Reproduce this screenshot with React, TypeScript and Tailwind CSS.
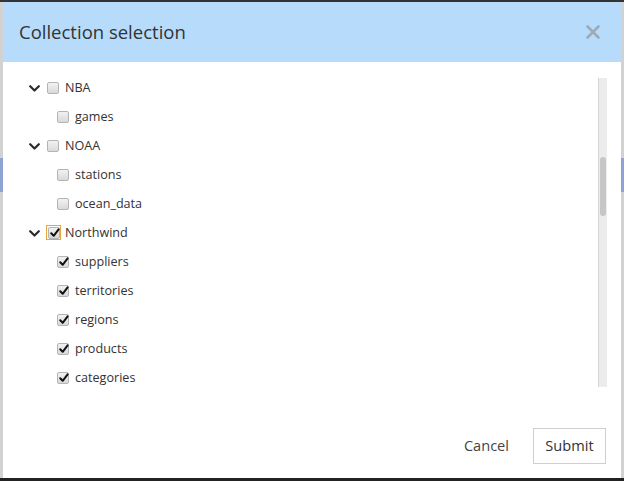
import React from "react";

type Item = { label: string; level: 1 | 2; checked: boolean; focus?: boolean };

const items: Item[] = [
  { label: "NBA", level: 1, checked: false },
  { label: "games", level: 2, checked: false },
  { label: "NOAA", level: 1, checked: false },
  { label: "stations", level: 2, checked: false },
  { label: "ocean_data", level: 2, checked: false },
  { label: "Northwind", level: 1, checked: true, focus: true },
  { label: "suppliers", level: 2, checked: true },
  { label: "territories", level: 2, checked: true },
  { label: "regions", level: 2, checked: true },
  { label: "products", level: 2, checked: true },
  { label: "categories", level: 2, checked: true },
];

function Chevron() {
  return (
    <svg width="11" height="7" viewBox="0 0 11 7" className="shrink-0">
      <path d="M1.2 1.2 L5.5 5.5 L9.8 1.2" fill="none" stroke="#2b2b2b" strokeWidth="2.2" strokeLinecap="round" strokeLinejoin="round" />
    </svg>
  );
}

function Box({ checked, focus }: { checked: boolean; focus?: boolean }) {
  const box = (
    <div className="relative w-[12px] h-[12px] rounded-[2px] border border-[#b4b4b4] bg-gradient-to-b from-[#f2f2f2] to-[#d9d9d9] shrink-0">
      {checked && (
        <svg width="12" height="12" viewBox="0 0 12 12" className="absolute left-[0px] top-[-1px]">
          <path d="M2.2 6.3 L4.7 8.8 L9.6 2.4" fill="none" stroke="#111" strokeWidth="2" strokeLinecap="round" strokeLinejoin="round" />
        </svg>
      )}
    </div>
  );
  if (focus) {
    return (
      <div className="w-[15px] h-[15px] border border-[#eaa43e] flex items-center justify-center mb-[2px] shrink-0 -ml-[1px] -mr-[2px]">
        {box}
      </div>
    );
  }
  return <div className="mb-[2px]">{box}</div>;
}

function Row({ item }: { item: Item }) {
  return (
    <div
      className={
        "flex items-center h-[29px] " + (item.level === 1 ? "pl-[26px]" : "pl-[54px]")
      }
    >
      {item.level === 1 && (
        <div className="mr-[7px] flex items-center">
          <Chevron />
        </div>
      )}
      <Box checked={item.checked} focus={item.focus} />
      <span className="ml-[6px] text-[12.6px] text-[#333] leading-none">{item.label}</span>
    </div>
  );
}

export default function App() {
  return (
    <div
      className="w-[624px] h-[481px] flex flex-col overflow-hidden bg-[#cfcfcf]"
      style={{ fontFamily: '"Open Sans", "Noto Sans", sans-serif' }}
    >
      <div className="h-[2px] bg-[#333] shrink-0" />
      <div className="flex h-[476px] shrink-0">
        <div className="w-[3px] bg-[#d2d2d2] flex flex-col">
          <div className="h-[156px]" />
          <div className="h-[34px] bg-[#8ea3d3]" />
        </div>
        <div className="w-[618px] bg-white flex flex-col">
          <div className="h-[60px] bg-[#b7dcfb] flex items-center justify-between pl-[16px] pr-[21px]">
            <span className="text-[18.5px] text-[#333] -mt-[1px]">Collection selection</span>
            <svg width="14" height="14" viewBox="0 0 14 14">
              <path d="M1.5 1.5 L12.5 12.5 M12.5 1.5 L1.5 12.5" stroke="#9eabb6" strokeWidth="2.6" strokeLinecap="round" />
            </svg>
          </div>
          <div className="pt-[16px] flex">
            <div className="flex-1 h-[309px] overflow-hidden">
              <div className="-mt-[4px]">
                {items.map((it) => (
                  <Row key={it.label} item={it} />
                ))}
              </div>
            </div>
            <div className="w-[9px] h-[309px] bg-[#ececec] border-l border-[#d4d4d4] flex flex-col mr-[14px]">
              <div className="h-[79px]" />
              <div className="h-[59px] bg-[#c6c6c6] rounded-[4px] mx-[1px]" />
            </div>
          </div>
          <div className="flex-1 flex items-start justify-end pt-[41px] pr-[15px]">
            <span className="text-[14.6px] text-[#444] mt-[7px] mr-[24px]">Cancel</span>
            <div className="w-[73px] h-[36px] border border-[#cfcfcf] flex items-center justify-center text-[14.6px] text-[#333]">
              Submit
            </div>
          </div>
        </div>
        <div className="w-[3px] bg-[#d2d2d2] flex flex-col">
          <div className="h-[156px]" />
          <div className="h-[34px] bg-[#8ea3d3]" />
        </div>
      </div>
      <div className="flex-1 bg-[#222]" />
    </div>
  );
}
